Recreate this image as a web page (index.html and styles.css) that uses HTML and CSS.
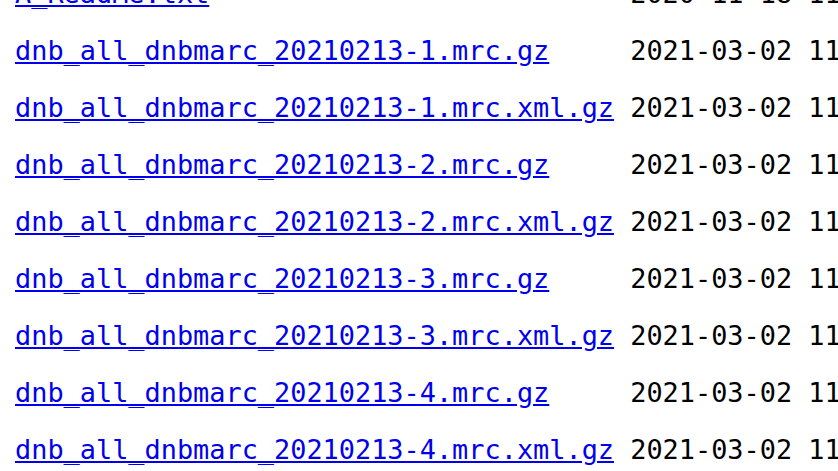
FILE: index.html
```html
<!DOCTYPE html>
<html lang="en">

<head>
    <meta charset="UTF-8">
    <title>Index of /dnb_all_dnbmarc</title>
    <link rel="stylesheet" href="styles.css">
</head>

<body>
    <!-- Directory listing -->
<pre class="listing"><a href="A_ReadMe.txt">A_ReadMe.txt</a>                          2020-11-18 11:02  4.2K
<a href="dnb_all_dnbmarc_20210213-1.mrc.gz">dnb_all_dnbmarc_20210213-1.mrc.gz</a>     2021-03-02 11:24  1.2G
<a href="dnb_all_dnbmarc_20210213-1.mrc.xml.gz">dnb_all_dnbmarc_20210213-1.mrc.xml.gz</a> 2021-03-02 11:31  1.5G
<a href="dnb_all_dnbmarc_20210213-2.mrc.gz">dnb_all_dnbmarc_20210213-2.mrc.gz</a>     2021-03-02 11:25  1.2G
<a href="dnb_all_dnbmarc_20210213-2.mrc.xml.gz">dnb_all_dnbmarc_20210213-2.mrc.xml.gz</a> 2021-03-02 11:33  1.5G
<a href="dnb_all_dnbmarc_20210213-3.mrc.gz">dnb_all_dnbmarc_20210213-3.mrc.gz</a>     2021-03-02 11:26  1.2G
<a href="dnb_all_dnbmarc_20210213-3.mrc.xml.gz">dnb_all_dnbmarc_20210213-3.mrc.xml.gz</a> 2021-03-02 11:35  1.5G
<a href="dnb_all_dnbmarc_20210213-4.mrc.gz">dnb_all_dnbmarc_20210213-4.mrc.gz</a>     2021-03-02 11:27  1.1G
<a href="dnb_all_dnbmarc_20210213-4.mrc.xml.gz">dnb_all_dnbmarc_20210213-4.mrc.xml.gz</a> 2021-03-02 11:37  1.4G
</pre>
</body>

</html>
```

FILE: styles.css
```css
/* General */
body {
    margin: 0;
    background: #fff;
    color: #000;
    overflow: hidden;
}

/* Listing */
.listing {
    margin: -35px 0 0 15px;
    font-family: "DejaVu Sans Mono", monospace;
    font-size: 26.9px;
    line-height: 57px;
}

.listing a {
    color: #0000ee;
}
```
